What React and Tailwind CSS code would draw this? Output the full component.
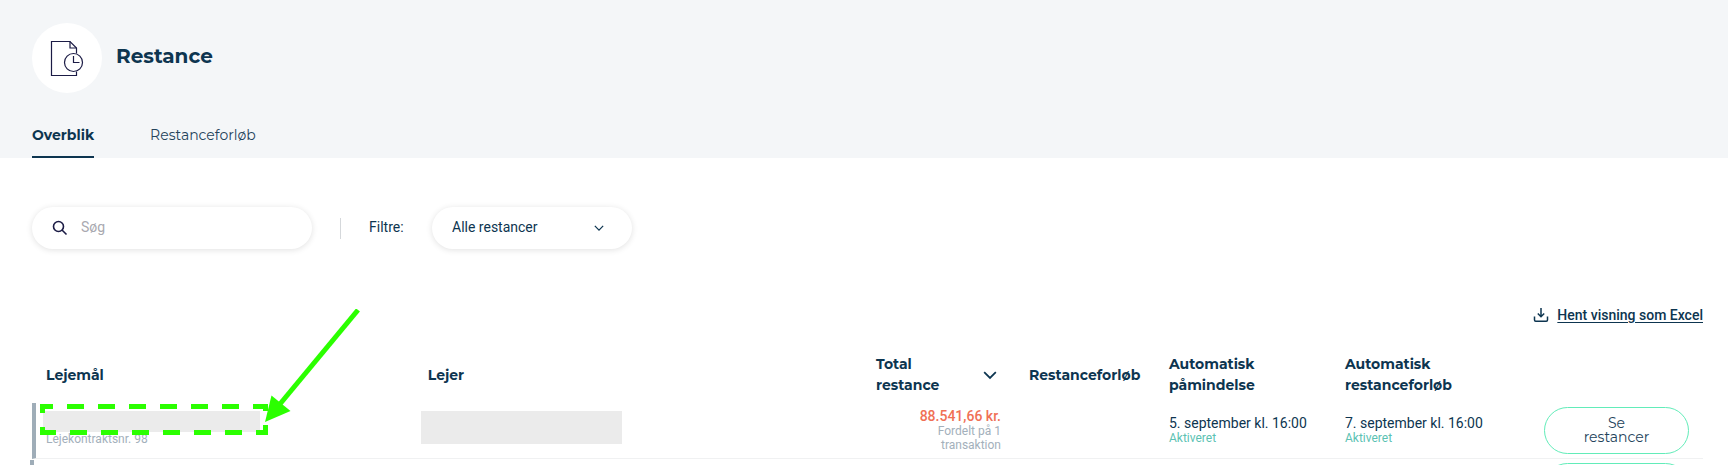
import { useState } from 'react';

const headings = [
  { label: 'Lejemål', width: 'w-[22.85%]' },
  { label: 'Lejer', width: '' },
  { label: 'Total restance', width: 'w-[153px]', sortable: true },
  { label: 'Restanceforløb', width: 'w-[140px]' },
  { label: 'Automatisk påmindelse', width: 'w-[176px]' },
  { label: 'Automatisk restanceforløb', width: 'w-[199px]' },
];

function ArrearsIcon() {
  return (
    <svg width="34" height="36" viewBox="0 0 34 36" fill="none" stroke="#1b1b45" strokeWidth="1.2">
      <path d="M26.5 13.5V8L20 1.5H1.5V35.5H26.5V31.5" />
      <path d="M20 1.5V8H26.5" />
      <circle cx="23.5" cy="22.5" r="9" />
      <path d="M23.5 16V22.5H29.5" />
    </svg>
  );
}

function SearchIcon() {
  return (
    <svg width="16" height="16" viewBox="0 0 16 16" fill="none" stroke="#1b1b45" strokeWidth="1.6">
      <circle cx="6.5" cy="6.5" r="5" />
      <path d="M10 10L14.5 14.5" />
    </svg>
  );
}

function DownloadIcon() {
  return (
    <svg width="16" height="16" viewBox="0 0 16 16" fill="none" stroke="#0d3550" strokeWidth="1.5">
      <path d="M8 1V9.5M4.8 6.5L8 9.7L11.2 6.5" />
      <path d="M1.5 9.5V13Q1.5 14.2 2.7 14.2H13.3Q14.5 14.2 14.5 13V9.5" />
    </svg>
  );
}

function Chevron({ className, size = 12 }) {
  return (
    <svg className={className} width={size} height={size} viewBox="0 0 12 12" fill="none" stroke="#0d3550" strokeWidth="1.5">
      <path d="M1 3.5L6 8.5L11 3.5" />
    </svg>
  );
}

function Highlight() {
  return (
    <svg
      className="absolute -top-[94px] left-0 pointer-events-none"
      width="330"
      height="130"
      viewBox="0 0 330 130"
      fill="none"
      stroke="#2bff00"
      strokeWidth="5"
    >
      <path d="M4 97.5H17M31 97.5H48M62 97.5H79M93 97.5H110M124 97.5H141M155 97.5H172M186 97.5H203M217 97.5H232" />
      <path d="M4 123.5H20M34 123.5H51M65 123.5H82M96 123.5H113M127 123.5H144M158 123.5H175M189 123.5H206M220 123.5H232" />
      <path d="M6.5 95V104M6.5 118V126M229.5 95V102M229.5 116V126" />
      <path d="M322 1L244 95" />
      <path d="M229 113L235.5 86.5L254.5 102Z" fill="#2bff00" stroke="none" />
    </svg>
  );
}

function Status({ date }) {
  return (
    <>
      <div className="text-sm leading-4">{date}</div>
      <div className="text-xs leading-[14px] text-[#5bc2b3]">Aktiveret</div>
    </>
  );
}

function ShowButton({ children, ...props }) {
  return (
    <button
      {...props}
      className="block w-full h-[47px] px-8 pb-0.5 rounded-full border border-[#62ecb9] bg-white font-['Montserrat','Inter',sans-serif] text-sm leading-[14px] text-[#24435b]"
    >
      {children}
    </button>
  );
}

export default function App() {
  const [query, setQuery] = useState('');
  const [filter, setFilter] = useState('all');

  return (
    <div className="h-screen overflow-hidden bg-white font-['Roboto',sans-serif] text-[#0d3550]">
      <header className="bg-[#f4f6f8] px-8 pt-[23px] font-['Montserrat','Inter',sans-serif]">
        <div className="flex items-center gap-[14px]">
          <div className="w-[70px] h-[70px] rounded-full bg-white flex items-center justify-center">
            <ArrearsIcon />
          </div>
          <h1 className="pb-1 text-xl font-bold">Restance</h1>
        </div>
        <nav className="mt-8 flex gap-14 text-sm leading-5">
          <a href="#overblik" className="pb-[11px] border-b-2 border-[#0d3550] font-bold">Overblik</a>
          <a href="#forloeb" className="pb-[11px] border-b-2 border-transparent text-[#24435b]">Restanceforløb</a>
        </nav>
      </header>

      <main className="pl-8 pr-[25px] pt-[49px]">
        {/* Filters */}
        <div className="flex items-center text-sm">
          <label className="w-[280px] h-[42px] px-5 flex items-center gap-[13px] rounded-full bg-white shadow-[0_1px_6px_rgba(0,0,0,0.12)]">
            <SearchIcon />
            <input
              type="text"
              aria-label="Søg"
              placeholder="Søg"
              value={query}
              onChange={(e) => setQuery(e.target.value)}
              className="flex-1 min-w-0 pb-0.5 bg-transparent outline-none placeholder:text-[#a9a9b0]"
            />
          </label>
          <div className="ml-7 w-px h-[21px] bg-[#d5d8db]" />
          <label htmlFor="filter" className="ml-7 w-[63px] pb-0.5">Filtre:</label>
          <div className="relative w-[200px]">
            <select
              id="filter"
              value={filter}
              onChange={(e) => setFilter(e.target.value)}
              className="w-full h-[42px] px-5 pb-0.5 appearance-none rounded-full bg-white outline-none shadow-[0_1px_6px_rgba(0,0,0,0.12)]"
            >
              <option value="all">Alle restancer</option>
            </select>
            <Chevron className="absolute right-7 top-4 pointer-events-none" size={10} />
          </div>
        </div>

        <div className="mt-14 flex justify-end">
          <a href="#excel" className="flex items-center gap-2 text-sm leading-5 font-medium">
            <DownloadIcon />
            <span className="underline underline-offset-2">Hent visning som Excel</span>
          </a>
        </div>

        <table className="mt-[29px] w-full table-fixed border-separate border-spacing-0 text-left">
          <thead className="font-['Montserrat','Inter',sans-serif] text-sm leading-[21px]">
            <tr>
              {headings.map((h) => (
                <th key={h.label} className={`px-[14px] pb-[7px] font-bold align-middle ${h.width}`}>
                  {h.sortable ? (
                    <button className="w-full flex items-center justify-between gap-8 pr-1 text-left">
                      {h.label}
                      <Chevron className="shrink-0" size={14} />
                    </button>
                  ) : (
                    h.label
                  )}
                </th>
              ))}
              <th className="w-[173px]" />
            </tr>
          </thead>
          <tbody>
            <tr className="h-14">
              <td className="relative pl-[7px] pt-2 align-top border-l-4 border-l-[#9fadb8] border-b border-b-[#f0f1f2]">
                <div className="w-[217px] h-[21px] bg-[#ebebeb]" />
                <div className="pl-[3px] text-xs leading-[14px] text-[#a3b0bb]">Lejekontraktsnr. 98</div>
                <Highlight />
              </td>
              <td className="pl-[7px] pt-2 align-top border-b border-[#f0f1f2]">
                <div className="w-[201px] h-[33px] bg-[#ebebeb]" />
              </td>
              <td className="px-[14px] pb-0.5 text-right align-middle border-b border-[#f0f1f2]">
                <div className="text-sm leading-4 font-medium text-[#f07055]">88.541,66 kr.</div>
                <div className="pl-12 text-xs leading-[14px] text-[#a3b0bb]">Fordelt på 1 transaktion</div>
              </td>
              <td className="border-b border-[#f0f1f2]" />
              <td className="px-[14px] pb-0.5 align-middle border-b border-[#f0f1f2]">
                <Status date="5. september kl. 16:00" />
              </td>
              <td className="px-[14px] pb-0.5 align-middle border-b border-[#f0f1f2]">
                <Status date="7. september kl. 16:00" />
              </td>
              <td className="px-[14px] align-middle border-b border-[#f0f1f2]">
                <ShowButton>Se restancer</ShowButton>
              </td>
            </tr>
            <tr className="h-14">
              <td className="relative">
                <span className="absolute top-px -left-0.5 w-1 h-full bg-[#9fadb8]" />
              </td>
              <td colSpan={5} />
              <td className="px-[14px] pt-1 align-top">
                <ShowButton aria-label="Se restancer" />
              </td>
            </tr>
          </tbody>
        </table>
      </main>
    </div>
  );
}
